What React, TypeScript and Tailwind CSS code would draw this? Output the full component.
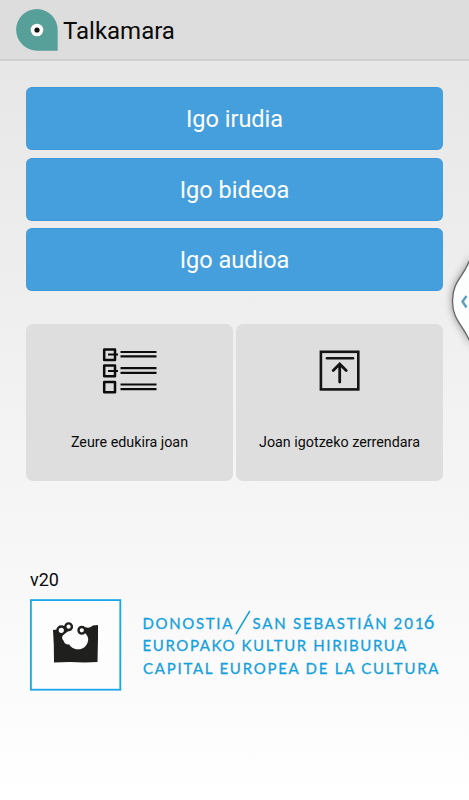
const uploads = ['Igo irudia', 'Igo bideoa', 'Igo audioa'];

function TalkamaraLogo() {
  return (
    <svg width="42" height="42" viewBox="0 0 42 42" className="shrink-0">
      <path d="M21 0A20.8 20.8 0 0 1 41.7 21V41.7H21A20.8 20.8 0 0 1 21 0Z" fill="#579f99" />
      <circle cx="21" cy="21" r="6.3" fill="#fff" />
      <circle cx="21" cy="21" r="2.6" fill="#111" />
    </svg>
  );
}

function ListIcon() {
  return (
    <svg width="56" height="48" viewBox="0 0 56 48" fill="none" stroke="#0c0c0c" strokeWidth="2.5" strokeLinejoin="round">
      <rect x="2.2" y="2.4" width="10.8" height="10.6" />
      <rect x="2.2" y="18.4" width="10.8" height="10.8" />
      <rect x="2.2" y="34.9" width="10.8" height="10.4" />
      <path d="M6 7.5H16M6 23.9H16" strokeWidth="2" />
      <path d="M18.5 5H54.5M18.5 9.4H54.5M18.5 21.2H54.5M18.5 25.9H54.5M18.5 37.5H54.5M18.5 42.2H54.5" strokeWidth="2.2" />
    </svg>
  );
}

function UploadIcon() {
  return (
    <svg width="42" height="42" viewBox="0 0 42 42" fill="none" stroke="#141414">
      <rect x="1.9" y="2.8" width="37.4" height="37.6" strokeWidth="2.6" />
      <path d="M8 9.2H34" strokeWidth="2.6" strokeLinecap="round" />
      <path d="M20.7 33V15.5M14.2 21.5L20.7 15L27.2 21.5" strokeWidth="2.8" strokeLinecap="round" />
    </svg>
  );
}

function SponsorMark() {
  return (
    <svg width="92" height="92" viewBox="0 0 92 92" className="shrink-0">
      <rect x="0.9" y="1.1" width="89.4" height="89.6" fill="#fdfdfd" stroke="#1aa7e8" strokeWidth="1.8" />
      <path
        d="M23 31L27 30.5L33 28L40 25L43 33L51 28L57 28.5C59 29.5 61 28 63 26.5L68 26V39L67.5 63L55 63.5L40 63L24 63.5L23.8 46Z"
        fill="#1f201e"
      />
      <path
        d="M35 34.5L43 29V24H50L54 33C57 36 58.5 38 58.2 41C57.5 47 53 50.3 48 50.3C43 50 41 48 39 45.2C36 46 34 44 33.5 41.5C31.5 39.5 31.5 37 35 34.5Z"
        fill="#fdfdfd"
      />
      <g fill="#fdfdfd" stroke="#1f201e" strokeWidth="2.4">
        <circle cx="31.3" cy="31.3" r="3.8" />
        <circle cx="38.6" cy="27.7" r="3.3" />
        <circle cx="51.8" cy="31.3" r="3.3" />
      </g>
    </svg>
  );
}

function SponsorName() {
  return (
    <svg width="300" height="92" viewBox="0 0 300 92" className="fill-[#149fdd] stroke-[#149fdd] stroke-[0.3px] font-['Lato',sans-serif] text-[15.2px]">
      <text x="-0.5" y="29.5" textLength="91">DONOSTIA</text>
      <path d="M94.5 34.5L108 12" strokeWidth="1.6" strokeLinecap="round" className="stroke-[1.6px]" />
      <text x="111" y="29.5" textLength="136">SAN SEBASTIÁN</text>
      <text x="254" y="29.5" textLength="30.5">201</text>
      <text x="284.5" y="29.5" fontSize="18.5">6</text>
      <text x="-0.5" y="52.5" textLength="267.5">EUROPAKO KULTUR HIRIBURUA</text>
      <text x="0" y="75.3" textLength="299.5">CAPITAL EUROPEA DE LA CULTURA</text>
    </svg>
  );
}

function DrawerHandle() {
  return (
    <svg width="29" height="130" viewBox="0 0 29 130" className="absolute top-[236px] right-0">
      <defs>
        <filter id="shade" x="-60%" y="-20%" width="200%" height="140%">
          <feGaussianBlur stdDeviation="4" />
        </filter>
      </defs>
      <path d="M32 19C26 39 13 43 13 65C13 86 25 89 32 111Z" fill="#000" opacity=".5" filter="url(#shade)" />
      <path d="M32 17C26 41 12.5 43 12.5 65C12.5 86 25 89 32 111Z" fill="#fcfdfd" stroke="#666" strokeWidth="1.3" />
      <path d="M26.5 60L22.5 65.5L26.5 71.5" fill="none" stroke="#5e9fbd" strokeWidth="2.4" />
    </svg>
  );
}

export default function App() {
  return (
    <div className="relative h-[800px] w-[469px] overflow-hidden bg-linear-to-b from-[#e5e5e5] to-white font-['Roboto',sans-serif] text-[#0b0b0b]">
      <header className="flex h-[61px] items-center gap-[5px] border-b-2 border-[#cfcfcf] bg-[#dddddd] pl-4">
        <TalkamaraLogo />
        <h1 className="pt-[3px] text-[24px]">Talkamara</h1>
      </header>

      <main className="px-[26px] pt-[26px]">
        <div className="flex flex-col gap-[7.5px]">
          {uploads.map((label) => (
            <button key={label} className="h-[63px] rounded-[6px] border-y border-[#3d98d8] bg-[#469fdd] pt-[3px] text-[23.5px] text-white">
              {label}
            </button>
          ))}
        </div>

        <div className="mt-[33px] grid grid-cols-2 gap-[3px]">
          <button className="flex h-[157px] flex-col items-center rounded-[7px] bg-[#dedede] pt-[23px]">
            <ListIcon />
            <span className="mt-[37px] text-[14.3px] leading-5">Zeure edukira joan</span>
          </button>
          <button className="flex h-[157px] flex-col items-center rounded-[7px] bg-[#dedede] pt-[25px]">
            <UploadIcon />
            <span className="mt-[41px] text-[14.3px] leading-5">Joan igotzeko zerrendara</span>
          </button>
        </div>
      </main>

      <footer className="px-[30px] pt-[87px]">
        <p className="text-[18px] leading-6">v20</p>
        <div className="mt-[7px] flex gap-[21px]">
          <SponsorMark />
          <SponsorName />
        </div>
      </footer>

      <DrawerHandle />
    </div>
  );
}
